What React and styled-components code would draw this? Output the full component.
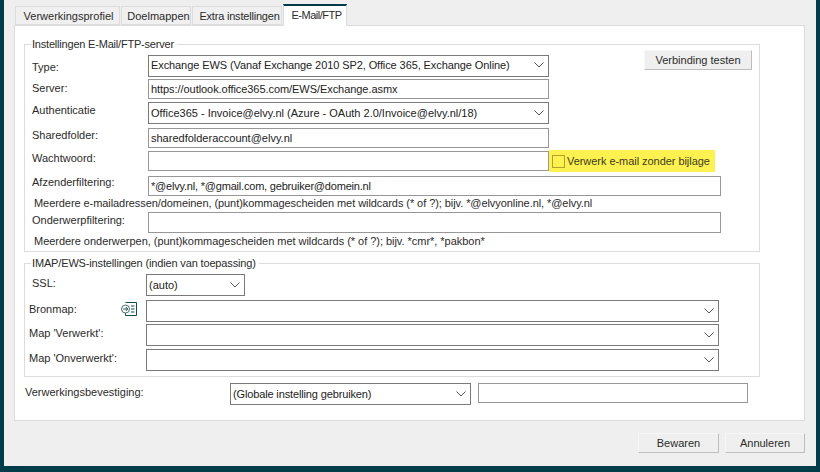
import React from "react";
import styled, { createGlobalStyle } from "styled-components";

const Global = createGlobalStyle`
  html, body { margin: 0; padding: 0; background: #013c4b; }
  * { box-sizing: border-box; }
  body { font-family: "Liberation Sans", Arial, sans-serif; font-size: 11px; color: #2b2b2b; }
`;
const Screen = styled.div`
  width: 820px; height: 472px; background: #013c4b; padding: 0 4px 6px 4px; overflow: hidden;
`;
const Win = styled.div`
  height: 466px; background: #efefef; padding: 4px 11px 0 10px; display: flex; flex-direction: column;
`;
const Tabs = styled.div`
  display: flex; height: 21px; padding-left: 1px; gap: 1px; align-items: flex-end;
`;
const Tab = styled.div`
  width: ${p => p.$w}px;
  height: ${p => (p.$active ? 22 : 19)}px;
  margin-bottom: ${p => (p.$active ? -1 : 0)}px;
  display: flex; align-items: center; justify-content: center;
  white-space: nowrap;
  letter-spacing: ${p => p.$ls || 0}px;
  background: ${p => (p.$active ? "#fff" : "#f0f0f0")};
  border: 1px solid #dcdcdc;
  border-bottom: ${p => (p.$active ? "none" : "1px solid #dcdcdc")};
  border-top: ${p => (p.$active ? "2px solid #013c4b" : "1px solid #dcdcdc")};
  position: relative; z-index: ${p => (p.$active ? 2 : 0)};
  padding: 0 0 ${p => (p.$active ? 3 : 0)}px ${p => p.$pl || 3}px;
`;
const Page = styled.div`
  height: 396px; background: #fff; border: 1px solid #dcdcdc; padding: 12px 44px 0 9px;
`;
const Group = styled.fieldset`
  margin: ${p => p.$mt || 0}px 0 0 0; border: 1px solid #dcdcdc;
  padding: 4px 7px ${p => p.$pb}px 7px; min-width: 0; width: 736px;
`;
const Legend = styled.legend`
  padding: 0 3px 0 1px; margin-left: -1px; font-size: 11px; line-height: 13px; height: 13px;
  letter-spacing: ${p => p.$ls}px;
`;
const Row = styled.div`
  display: flex; align-items: flex-start; margin-top: ${p => p.$mt || 0}px;
`;
const Label = styled.div`
  width: ${p => p.$w || 116}px; padding-top: ${p => p.$top || 0}px; flex: none; white-space: nowrap;
  margin-left: ${p => p.$ml || 0}px;
`;
const Field = styled.input`
  width: ${p => p.$w}px; height: ${p => p.$h || 20}px; flex: none;
  border: 1px solid #979797; background: #fff; padding: 0 2px; margin: 0 0 0 ${p => p.$ml || 0}px;
  font: 11px "Liberation Sans", Arial, sans-serif; color: #222; outline: none;
  letter-spacing: ${p => p.$ls || 0}px;
`;
const SelectBox = styled.div`
  width: ${p => p.$w}px; height: 22px; flex: none; display: flex; align-items: center;
  justify-content: space-between; border: 1px solid #7a7a7a; background: #fff;
  padding: 0 4px ${p => p.$pb || 0}px 2px; color: #222; white-space: nowrap;
  letter-spacing: ${p => p.$ls || 0}px;
`;
const Chevron = () => (
  <svg width="10" height="6" viewBox="0 0 10 6" fill="none" stroke="#555" strokeWidth="1">
    <path d="M0.5 0.5 L5 5 L9.5 0.5" />
  </svg>
);
const Select = ({ w, ls, pb, children }) => (
  <SelectBox $w={w} $ls={ls} $pb={pb}><span>{children}</span><Chevron /></SelectBox>
);
const TestButton = styled.button`
  width: ${p => p.$w}px; height: 20px; flex: none; padding: 0; background: #efefef;
  border: 1px solid #f7f7f7; border-right-color: #bdbdbd; border-bottom-color: #bdbdbd;
  font: 11px "Liberation Sans", Arial, sans-serif; color: #2b2b2b;
`;
const TopButton = styled(TestButton)`
  margin: -5px 0 0 95px;
`;
const Highlight = styled.label`
  width: 166px; height: 22px; margin-top: -1px; flex: none; display: flex; align-items: center; gap: 2px;
  background: #fff250; padding-left: 3px; color: #3a3a20; white-space: nowrap; letter-spacing: -0.05px;
`;
const Box = styled.span`
  width: 13px; height: 13px; flex: none; border: 1px solid #b0a22e;
`;
const Help = styled.div`
  margin: ${p => p.$mt}px 0 0 2px; line-height: 13px; height: 13px; white-space: nowrap;
  letter-spacing: ${p => p.$ls}px;
`;
const LabelWithIcon = styled(Label)`
  display: flex; justify-content: space-between; padding-right: 9px;
`;
const Footer = styled.div`
  display: flex; justify-content: flex-end; gap: 6px; margin-top: 12px;
`;
const FolderIcon = () => (
  <svg width="16" height="14" viewBox="0 0 16 14" fill="none" stroke="#0f4c5a" strokeWidth="1" style={{ marginTop: -1 }}>
    <path d="M4.5 .5H15.5V13.5H4.5V10" />
    <path d="M10 4H13.5M10 7H13.5M10 10H13.5" />
    <circle cx="4.5" cy="7" r="4" fill="#fff" stroke="#4a6a72" />
    <path d="M2 7H6.5M4.8 5L6.8 7L4.8 9" stroke="#23505c" />
  </svg>
);

export default function App() {
  return (
    <Screen>
      <Global />
      <Win>
        <Tabs>
          <Tab $w={105} $pl={2}>Verwerkingsprofiel</Tab>
          <Tab $w={70} $pl={5}>Doelmappen</Tab>
          <Tab $w={90} $pl={5} $ls={-0.2}>Extra instellingen</Tab>
          <Tab $w={64} $active $ls={-0.5}>E-Mail/FTP</Tab>
        </Tabs>
        <Page>
          <Group $pb={3}>
            <Legend $ls={-0.2}>Instellingen E-Mail/FTP-server</Legend>
            <Row>
              <Label $top={6}>Type:</Label>
              <Select w={401} ls={-0.09} pb={2}>Exchange EWS (Vanaf Exchange 2010 SP2, Office 365, Exchange Online)</Select>
              <TopButton $w={108}>Verbinding testen</TopButton>
            </Row>
            <Row $mt={2}>
              <Label $top={3}>Server:</Label>
              <Field $w={401} $ls={-0.06} defaultValue="https://outlook.office365.com/EWS/Exchange.asmx" />
            </Row>
            <Row $mt={3}>
              <Label $top={2}>Authenticatie</Label>
              <Select w={401}>Office365 - Invoice@elvy.nl (Azure - OAuth 2.0/Invoice@elvy.nl/18)</Select>
            </Row>
            <Row $mt={4}>
              <Label $top={1}>Sharedfolder:</Label>
              <Field $w={401} defaultValue="sharedfolderaccount@elvy.nl" />
            </Row>
            <Row $mt={3}>
              <Label $top={1}>Wachtwoord:</Label>
              <Field $w={401} />
              <Highlight><Box />Verwerk e-mail zonder bijlage</Highlight>
            </Row>
            <Row $mt={4}>
              <Label>Afzenderfiltering:</Label>
              <Field $w={573} $ls={-0.2} defaultValue="*@elvy.nl, *@gmail.com, gebruiker@domein.nl" />
            </Row>
            <Help $mt={1} $ls={-0.07}>Meerdere e-mailadressen/domeinen, (punt)kommagescheiden met wildcards (* of ?); bijv. *@elvyonline.nl, *@elvy.nl</Help>
            <Row $mt={2}>
              <Label $top={2}>Onderwerpfiltering:</Label>
              <Field $w={573} $h={21} />
            </Row>
            <Help $mt={2} $ls={-0.03}>Meerdere onderwerpen, (punt)kommagescheiden met wildcards (* of ?); bijv. *cmr*, *pakbon*</Help>
          </Group>
          <Group $mt={5} $pb={5}>
            <Legend $ls={-0.15}>IMAP/EWS-instellingen (indien van toepassing)</Legend>
            <Row>
              <Label $w={114} $top={3}>SSL:</Label>
              <Select w={99}>(auto)</Select>
            </Row>
            <Row $mt={4}>
              <LabelWithIcon $w={117} $ml={-3} $top={3}>Bronmap:<FolderIcon /></LabelWithIcon>
              <Select w={573} />
            </Row>
            <Row $mt={2}>
              <Label $w={117} $ml={-3} $top={3}>Map 'Verwerkt':</Label>
              <Select w={573} />
            </Row>
            <Row $mt={3}>
              <Label $w={117} $ml={-3} $top={3}>Map 'Onverwerkt':</Label>
              <Select w={573} />
            </Row>
          </Group>
          <Row $mt={6}>
            <Label $w={205} $ml={1} $top={3}>Verwerkingsbevestiging:</Label>
            <Select w={241} ls={-0.14}>(Globale instelling gebruiken)</Select>
            <Field $w={270} $ml={7} />
          </Row>
        </Page>
        <Footer>
          <TestButton $w={81}>Bewaren</TestButton>
          <TestButton $w={80}>Annuleren</TestButton>
        </Footer>
      </Win>
    </Screen>
  );
}
